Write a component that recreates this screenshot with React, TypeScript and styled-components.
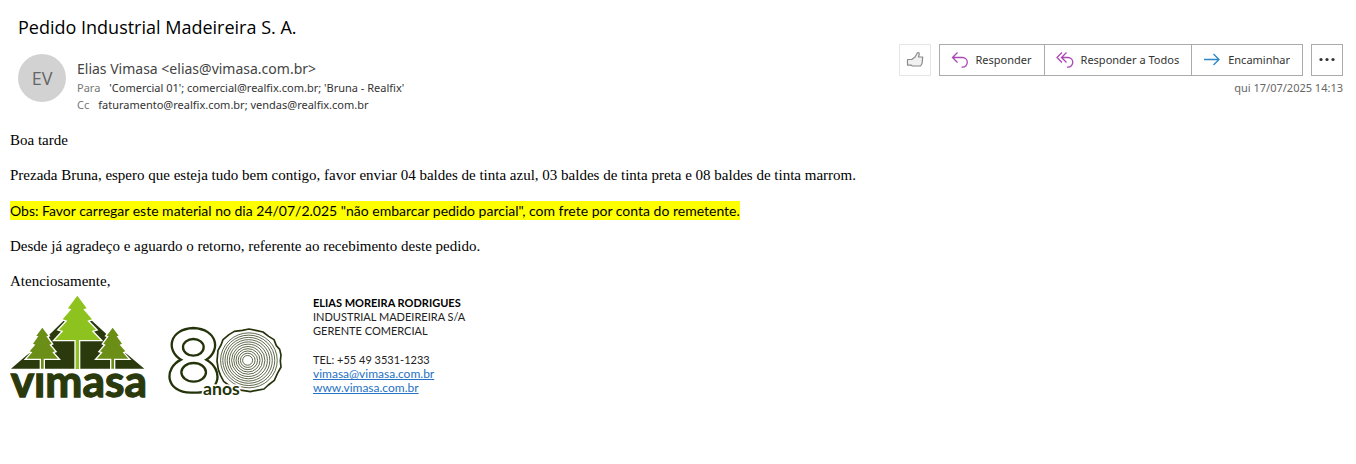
import React from "react";
import styled, { createGlobalStyle } from "styled-components";

const GlobalStyle = createGlobalStyle`
  *, *::before, *::after { box-sizing: border-box; }
  body { margin: 0; background: #fff; color: #000; }
`;

const ui = `"Noto Sans", "Open Sans", sans-serif`;
const humanist = `Lato, "Open Sans", sans-serif`;

const Page = styled.main`
  padding: 14px 13px 24px 10px;
`;

const Subject = styled.h1`
  margin: 0;
  padding-left: 8px;
  font: 400 18px/26px "Open Sans", sans-serif;
`;

const Header = styled.header`
  display: flex;
  justify-content: space-between;
  align-items: flex-start;
  gap: 16px;
  padding: 4px 0 0 8px;
`;

const Sender = styled.div`
  display: flex;
  gap: 11px;
  padding-top: 10px;
`;

const Avatar = styled.div`
  display: flex;
  flex: none;
  align-items: center;
  justify-content: center;
  width: 48px;
  height: 48px;
  border-radius: 50%;
  background: #d2d2d2;
  color: #666;
  font: 400 18px/24px "Open Sans", sans-serif;
`;

const From = styled.div`
  padding-top: 5px;
  color: #444;
  font: 400 14px/20px ${ui};
`;

const Recipients = styled.dl`
  display: flex;
  gap: 9px;
  margin: 0;
  color: #333;
  font: 400 11px/17px ${ui};

  dt { color: #777; }
  dd { margin: 0; }
`;

const Side = styled.div`
  display: flex;
  flex: none;
  flex-direction: column;
  align-items: flex-end;
  gap: 4px;
`;

const Toolbar = styled.div`
  display: flex;
  gap: 8px;
`;

const Group = styled.div`
  display: flex;

  button + button { margin-left: -1px; }
`;

const Button = styled.button<{ $faint?: boolean }>`
  display: flex;
  align-items: center;
  justify-content: center;
  gap: 7px;
  height: 32px;
  padding: 0 12px 0 11px;
  border: 1px solid ${(p) => (p.$faint ? "#e6e6e6" : "#ababab")};
  background: #fff;
  color: #333;
  font: 400 11px/16px ${ui};
`;

const IconButton = styled(Button)`
  width: 32px;
  padding: 0;
`;

const Icon = styled.svg`
  display: block;
  flex: none;
  fill: none;
`;

const Sent = styled.time`
  color: #666;
  font: 400 11px/16px ${ui};
`;

const Body = styled.article`
  display: flex;
  flex-direction: column;
  gap: 17px;
  padding-top: 18px;
  font: 400 15px/18px "Liberation Serif", "Times New Roman", serif;
`;

const Text = styled.p`
  margin: 0;
`;

const Note = styled(Text)`
  font: 400 14px/19px ${humanist};
`;

const Highlight = styled.mark`
  padding: 1px 0;
  background: #ff0;
  color: #000;
`;

const Signature = styled.footer`
  display: flex;
  align-items: flex-start;
  margin-top: 5px;
`;

const Logo = styled.svg`
  display: block;
  flex: none;
`;

const Anniversary = styled(Logo)`
  margin: 31px 31px 0 20px;
`;

const Contact = styled.address`
  display: flex;
  flex-direction: column;
  gap: 15px;
  padding-top: 1px;
  color: #222;
  font: normal 400 11px/14px ${humanist};
`;

const Lines = styled.div`
  display: flex;
  flex-direction: column;
  align-items: flex-start;

  strong { color: #000; }
`;

const ContactLink = styled.a`
  color: #2672c4;
  font-size: 12px;
  text-decoration: underline;
`;

const ThumbIcon = () => (
  <Icon width="18" height="18" viewBox="0 0 18 18" stroke="#8a8a8a" strokeWidth="1.2" strokeLinejoin="round">
    <path fill="#f1f1f1" d="M1.500 8.500h4.200l3.300-2.500 2.200-3.800q.7-.9 1.500-.4.700.5.500 1.400l-.7 2.800h4.200l-.6 6.500-1.600 2.500H6.300l-1.300-.9H1.500z" />
  </Icon>
);

const ReplyIcon = () => (
  <Icon width="18" height="18" viewBox="0 0 18 18" stroke="#ab47b5" strokeWidth="1.3">
    <path d="M6.500 1.500 1.500 6.500l5 5M1.500 6.500h10a4.800 4.800 0 0 1 0 9.600h-1" />
  </Icon>
);

const ReplyAllIcon = () => (
  <Icon width="18" height="18" viewBox="0 0 18 18" stroke="#ab47b5" strokeWidth="1.3">
    <path d="M6 1.500 1 6.500l5 5M10.500 1.500l-5 5 5 5M5.500 6.500h6.500a4.800 4.800 0 0 1 0 9.600h-1" />
  </Icon>
);

const ForwardIcon = () => (
  <Icon width="18" height="18" viewBox="0 0 18 18" stroke="#2b88c8" strokeWidth="1.3">
    <path d="M1 8.500h15M10.500 3l5.500 5.500-5.500 5.500" />
  </Icon>
);

const MoreIcon = () => (
  <Icon width="18" height="18" viewBox="0 0 18 18">
    <g fill="#333">
      <circle cx="3" cy="8.500" r="1.600" />
      <circle cx="9" cy="8.500" r="1.600" />
      <circle cx="15" cy="8.500" r="1.600" />
    </g>
  </Icon>
);

const sideTree =
  "M0 128 18 152 12 154 28 176 21 179 38 199 30 202 47 221 4 221 4 251-4 251-4 221-47 221-30 202-38 199-21 179-28 176-12 154-18 152Z";

const CompanyLogo = () => (
  <Logo width="138" height="115" viewBox="30 30 414 345" role="img" aria-label="Vimasa">
    <text x="32" y="337" fill="#2b3a0c" stroke="#2b3a0c" strokeWidth="4" fontFamily="Lato, sans-serif" fontWeight="700" fontSize="133">
      vimasa
    </text>
    <path fill="#fff" d="M30 30H444V262H30Z" />
    <path fill="#2b3a0c" d="M33 251 80 211 147 163V150L200 98 232 76 266 98 320 148 322 163 385 211 433 251Z" />
    <g stroke="#fff" strokeWidth="8" style={{ paintOrder: "stroke" }}>
      <path fill="#6b8f16" transform="translate(127 0)" d={sideTree} />
      <path fill="#6b8f16" transform="translate(338 0)" d={sideTree} />
      <path
        fill="#8dc21f"
        d="M232 32 260 70 250 73 276 103 262 107 288 134 275 138 301 165 237 165 237 252 227 252 227 165 165 165 190 138 177 134 202 107 188 103 214 73 204 70Z"
      />
    </g>
  </Logo>
);

const rings = [15, 22, 29, 36, 43, 50, 57, 64, 71, 78, 85];

const AnniversaryLogo = () => (
  <Anniversary width="114" height="76" viewBox="39 45 342 228" role="img" aria-label="80 anos">
    <g fill="none" stroke="#24330a">
      <path
        strokeWidth="7"
        d="M78 146C32 119 42 54 115 51C188 54 198 119 154 146C204 174 200 243 128 245H108C30 243 26 172 78 146Z"
      />
      <ellipse cx="115" cy="109" rx="31" ry="25" strokeWidth="7" />
      <ellipse cx="116" cy="184" rx="37" ry="28" strokeWidth="7" />
      <path
        fill="#fff"
        strokeWidth="5"
        strokeLinejoin="round"
        d="M186 150 189 118 198 102 204 86 222 71 238 61 262 58 282 54 306 59 324 63 341 76 357 86 364 104 374 115 378 132 376 150 378 168 367 188 358 208 340 222 327 234 305 238 286 242 262 238 238 236 220 222 206 211 197 194 190 176Z"
      />
      {rings.map((r) => (
        <ellipse key={r} cx={277 + r / 18} cy="148" rx={r} ry={r * 0.97} strokeWidth="2.200" />
      ))}
    </g>
    <text
      x="144"
      y="252"
      fill="#24330a"
      stroke="#fff"
      strokeWidth="10"
      style={{ paintOrder: "stroke" }}
      fontFamily="Lato, sans-serif"
      fontWeight="700"
      fontSize="53"
    >
      anos
    </text>
  </Anniversary>
);

export default function App() {
  return (
    <Page>
      <GlobalStyle />
      <Subject>Pedido Industrial Madeireira S. A.</Subject>
      <Header>
        <Sender>
          <Avatar>EV</Avatar>
          <div>
            <From>Elias Vimasa &lt;elias@vimasa.com.br&gt;</From>
            <Recipients>
              <dt>Para</dt>
              <dd>'Comercial 01'; comercial@realfix.com.br; 'Bruna - Realfix'</dd>
            </Recipients>
            <Recipients>
              <dt>Cc</dt>
              <dd>faturamento@realfix.com.br; vendas@realfix.com.br</dd>
            </Recipients>
          </div>
        </Sender>
        <Side>
          <Toolbar>
            <IconButton type="button" $faint aria-label="Curtir">
              <ThumbIcon />
            </IconButton>
            <Group>
              <Button type="button">
                <ReplyIcon />
                Responder
              </Button>
              <Button type="button">
                <ReplyAllIcon />
                Responder a Todos
              </Button>
              <Button type="button">
                <ForwardIcon />
                Encaminhar
              </Button>
            </Group>
            <IconButton type="button" aria-label="Mais ações">
              <MoreIcon />
            </IconButton>
          </Toolbar>
          <Sent dateTime="2025-07-17T14:13">qui 17/07/2025 14:13</Sent>
        </Side>
      </Header>
      <Body>
        <Text>Boa tarde</Text>
        <Text>
          Prezada Bruna, espero que esteja tudo bem contigo, favor enviar 04 baldes de tinta azul, 03 baldes de tinta
          preta e 08 baldes de tinta marrom.
        </Text>
        <Note>
          <Highlight>
            Obs: Favor carregar este material no dia 24/07/2.025 "não embarcar pedido parcial", com frete por conta do
            remetente.
          </Highlight>
        </Note>
        <Text>Desde já agradeço e aguardo o retorno, referente ao recebimento deste pedido.</Text>
        <Text>Atenciosamente,</Text>
      </Body>
      <Signature>
        <CompanyLogo />
        <AnniversaryLogo />
        <Contact>
          <Lines>
            <strong>ELIAS MOREIRA RODRIGUES</strong>
            <span>INDUSTRIAL MADEIREIRA S/A</span>
            <span>GERENTE COMERCIAL</span>
          </Lines>
          <Lines>
            <span>TEL: +55 49 3531-1233</span>
            <ContactLink href="mailto:vimasa@vimasa.com.br">vimasa@vimasa.com.br</ContactLink>
            <ContactLink href="#site">www.vimasa.com.br</ContactLink>
          </Lines>
        </Contact>
      </Signature>
    </Page>
  );
}
